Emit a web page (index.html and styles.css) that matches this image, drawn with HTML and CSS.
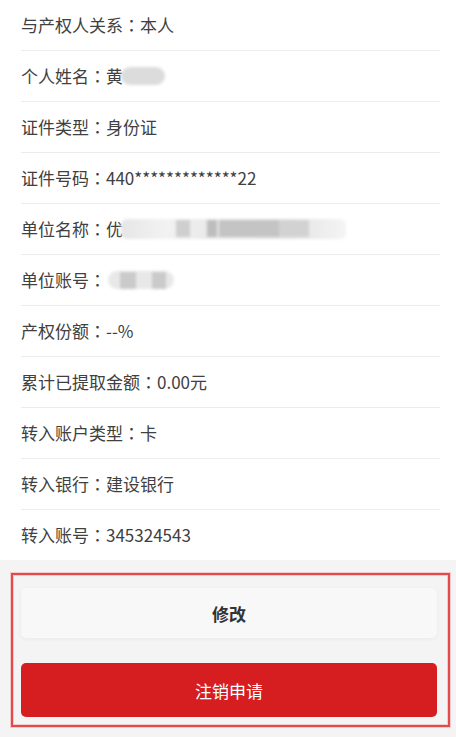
FILE: index.html
```html
<!DOCTYPE html>
<html lang="zh-CN">
<head>
<meta charset="utf-8">
<title>详情</title>
<link rel="stylesheet" href="styles.css">
</head>
<body>
<div class="page">
  <ul class="info">
    <li class="row">与产权人关系<span class="colon">：</span>本人</li>
    <li class="row">个人姓名<span class="colon">：</span>黄<span class="mask mask-name"></span></li>
    <li class="row">证件类型<span class="colon">：</span>身份证</li>
    <li class="row">证件号码<span class="colon">：</span>440*************22</li>
    <li class="row">单位名称<span class="colon">：</span>优<span class="mask mask-unit"><i class="b b1"></i><i class="b b2"></i><i class="b b3"></i><i class="b b4"></i></span></li>
    <li class="row">单位账号<span class="colon">：</span><span class="mask mask-acct"><i class="b b5"></i><i class="b b6"></i></span></li>
    <li class="row">产权份额<span class="colon">：</span>--%</li>
    <li class="row">累计已提取金额<span class="colon">：</span>0.00元</li>
    <li class="row">转入账户类型<span class="colon">：</span>卡</li>
    <li class="row">转入银行<span class="colon">：</span>建设银行</li>
    <li class="row">转入账号<span class="colon">：</span>345324543</li>
  </ul>
  <div class="actions">
    <button class="btn btn-edit">修改</button>
    <button class="btn btn-cancel">注销申请</button>
    <div class="highlight"></div>
  </div>
</div>
</body>
</html>
```

FILE: styles.css
```css
* { box-sizing: border-box; }
html, body {
  margin: 0;
  padding: 0;
  background: #ffffff;
}
body {
  font-family: "Noto Sans CJK SC", "Noto Sans", sans-serif;
  color: #404040;
}
.page {
  width: 456px;
  height: 737px;
  display: flex;
  flex-direction: column;
}
.info {
  list-style: none;
  margin: 0;
  padding: 0 16px 0 21px;
  background: #ffffff;
}
.row {
  height: 51px;
  display: flex;
  align-items: center;
  font-size: 17px;
  border-bottom: 1px solid #ececec;
  padding-bottom: 1px;
  white-space: pre;
}
.row:last-child {
  border-bottom: none;
  height: 50px;
}
.colon {
  font-family: "Noto Sans CJK JP", "Noto Sans CJK SC", sans-serif;
}
.mask {
  display: inline-block;
  position: relative;
  height: 18px;
  filter: blur(1.6px);
}
.mask-name {
  width: 44px;
  margin-left: -2px;
  background: #dcdcdc;
  border-radius: 9px;
}
.mask-unit {
  width: 225px;
  height: 20px;
  margin-left: -2px;
  background: linear-gradient(90deg, #e6e6e6 0%, #f2f2f2 20%, #e9e9e9 40%, #e4e4e4 75%, #f4f4f4 100%);
  border-radius: 6px;
}
.mask-acct {
  width: 66px;
  margin-left: 2px;
  background: #e8e8e8;
  border-radius: 9px;
}
.b {
  position: absolute;
  top: 1px;
  height: 17px;
  background: #c8c8c8;
}
.b1 { left: 55px; width: 14px; background: #cfcfcf; }
.b2 { left: 86px; width: 10px; background: #bdbdbd; }
.b3 { left: 98px; width: 60px; background: #c4c4c4; }
.b4 { left: 158px; width: 30px; background: #d2d2d2; }
.b5 { left: 12px; width: 16px; background: #cacaca; }
.b6 { left: 44px; width: 14px; background: #cacaca; }

.actions {
  flex: 1;
  position: relative;
  background: #f4f4f4;
  padding: 28px 19px 20px 21px;
  display: flex;
  flex-direction: column;
  gap: 25px;
}
.btn {
  width: 100%;
  border: none;
  font-family: "Noto Sans CJK SC", "Noto Sans", sans-serif;
  font-size: 17px;
  border-radius: 5px;
  padding: 0;
  cursor: pointer;
}
.btn-edit {
  height: 50px;
  background: #f8f8f8;
  color: #333333;
  font-weight: 700;
  box-shadow: 0 1px 4px rgba(0, 0, 0, 0.05);
}
.btn-cancel {
  height: 54px;
  background: #d61d1f;
  color: #ffffff;
  font-weight: 400;
}
.highlight {
  position: absolute;
  left: 11px;
  top: 13px;
  width: 439px;
  height: 154px;
  border: 2px solid #e24a4e;
  box-shadow: 0 0 0 1px rgba(235, 130, 130, 0.35), inset 0 0 0 1px rgba(235, 130, 130, 0.35);
  pointer-events: none;
}
```
